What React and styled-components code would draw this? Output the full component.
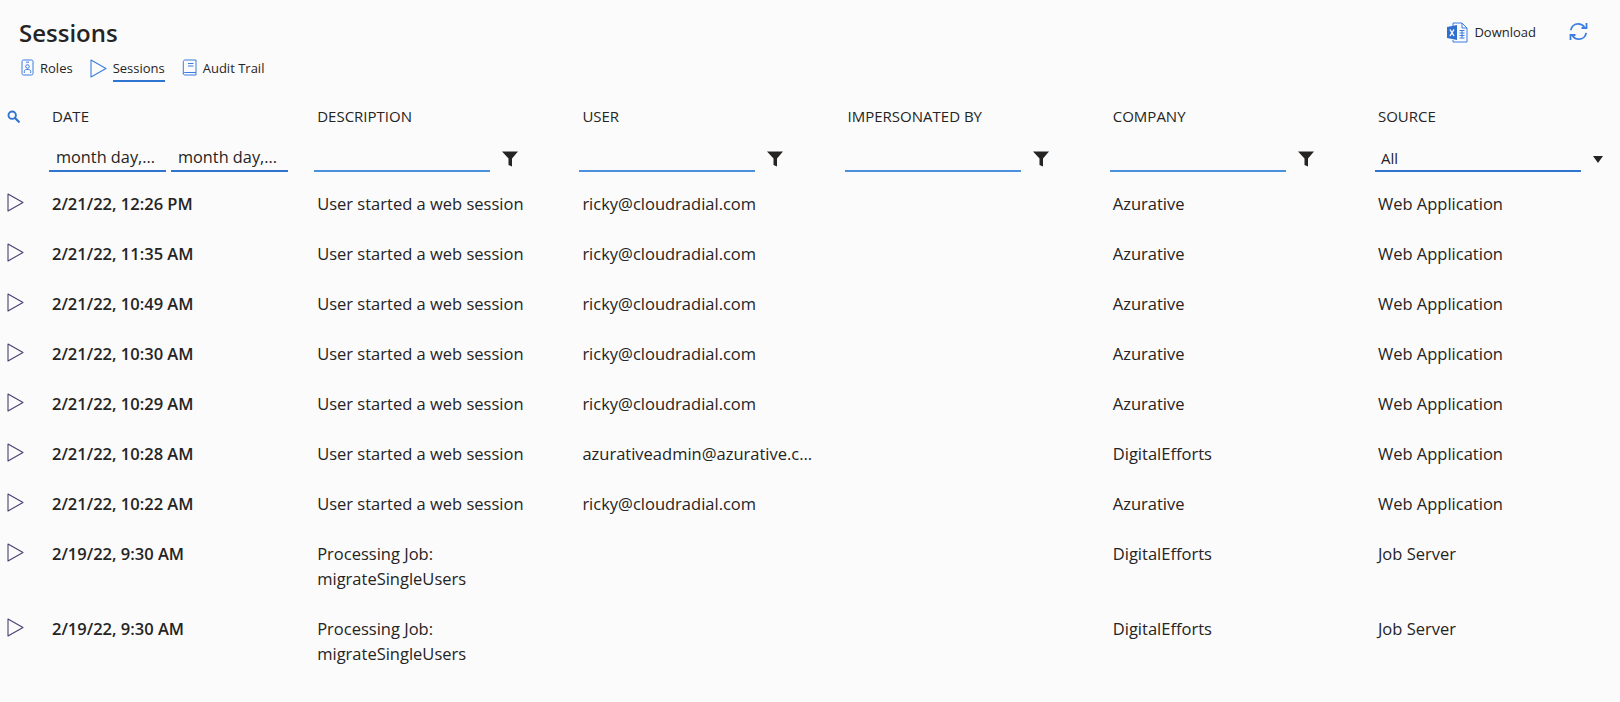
import React from 'react';
import styled, { createGlobalStyle } from 'styled-components';

const GlobalStyle = createGlobalStyle`
  html, body {
    margin: 0;
    padding: 0;
    background: #fbfbfc;
    color: #252423;
    font-family: 'Open Sans', 'Noto Sans', 'Liberation Sans', sans-serif;
  }
`;

const web = 'User started a web session';
const job = ['Processing Job:', 'migrateSingleUsers'];
const ricky = 'ricky@cloudradial.com';
const app = 'Web Application';

const rows = [
  { date: '2/21/22, 12:26 PM', desc: [web], user: ricky, company: 'Azurative', source: app },
  { date: '2/21/22, 11:35 AM', desc: [web], user: ricky, company: 'Azurative', source: app },
  { date: '2/21/22, 10:49 AM', desc: [web], user: ricky, company: 'Azurative', source: app },
  { date: '2/21/22, 10:30 AM', desc: [web], user: ricky, company: 'Azurative', source: app },
  { date: '2/21/22, 10:29 AM', desc: [web], user: ricky, company: 'Azurative', source: app },
  { date: '2/21/22, 10:28 AM', desc: [web], user: 'azurativeadmin@azurative.com', company: 'DigitalEfforts', source: app },
  { date: '2/21/22, 10:22 AM', desc: [web], user: ricky, company: 'Azurative', source: app },
  { date: '2/19/22, 9:30 AM', desc: job, user: '', company: 'DigitalEfforts', source: 'Job Server' },
  { date: '2/19/22, 9:30 AM', desc: job, user: '', company: 'DigitalEfforts', source: 'Job Server' },
];

const PlayIcon = ({ color = '#4b3f72' }) => (
  <svg width="17" height="19" viewBox="0 0 17 19" fill="none">
    <path d="M1 1 L16 9.5 L1 18 Z" stroke={color} strokeWidth="1.1" strokeLinejoin="round" />
  </svg>
);

const BadgeIcon = () => (
  <svg width="13" height="17" viewBox="0 0 13 17" fill="none" stroke="#3b7de0" strokeWidth="1">
    <rect x="1" y="1" width="11" height="15" rx="1.5" />
    <path d="M5 3.2h3" />
    <circle cx="6.5" cy="7.5" r="1.8" />
    <path d="M3.3 14v-1.5c0-1.2 1-2 2-2h2.4c1 0 2 .8 2 2V14" />
  </svg>
);

const BookIcon = () => (
  <svg width="15" height="17" viewBox="0 0 15 17" fill="none" stroke="#3b7de0" strokeWidth="1">
    <path d="M3 1h11v12.5H3c-1 0-1.7.7-1.7 1.3S2 16 3 16h11v-2.5" />
    <path d="M1.3 15V2.6C1.3 1.7 2 1 3 1" />
    <path d="M6 4.5h5.5M6 7h5.5" />
  </svg>
);

const SearchIcon = () => (
  <svg width="13" height="13" viewBox="0 0 13 13" fill="none" stroke="#2f74d0">
    <circle cx="5.2" cy="5.2" r="3.7" strokeWidth="1.9" />
    <path d="M8 8l3.8 3.8" strokeWidth="2.2" strokeLinecap="round" />
  </svg>
);

const FilterIcon = () => (
  <svg width="16" height="16" viewBox="0 0 16 16" fill="#252423">
    <path d="M0 .5h16L10 7.5v8L6.5 14V7.5z" />
  </svg>
);

const ExcelIcon = () => (
  <svg width="21" height="21" viewBox="0 0 21 21" fill="none">
    <path d="M6 4V1h9l5 5v14H6v-2" stroke="#3b7de0" strokeWidth="1" />
    <path d="M15 1v5h5" stroke="#3b7de0" strokeWidth="1" />
    <path d="M12.5 8.5h5M12.5 11h5M12.5 13.5h5M12.5 16h5M15 8.5v7.5" stroke="#3b7de0" strokeWidth="1" />
    <path d="M0 5l10-2v15L0 16z" fill="#2f6fd0" />
    <path d="M3 7.5l4 6.5M7 7.5L3 14" stroke="#fff" strokeWidth="1.4" />
  </svg>
);

const RefreshIcon = () => (
  <svg width="19" height="19" viewBox="0 0 19 19" fill="none" stroke="#3b7de0" strokeWidth="1.8">
    <path d="M1.8 8.2C2.4 4.4 5.5 1.8 9.2 1.8c2.6 0 4.8 1.2 6.2 3.2" />
    <path d="M17.5 1v5h-5" />
    <path d="M17.2 10.8c-.6 3.8-3.7 6.4-7.4 6.4-2.6 0-4.8-1.2-6.2-3.2" />
    <path d="M1.5 18v-5h5" />
  </svg>
);

const Tab = ({ icon, label, active }) => (
  <TabItem>
    {icon}
    <TabLabel $active={active}>{label}</TabLabel>
  </TabItem>
);

const App = () => {
  return (
    <Page>
      <GlobalStyle />
      <Header>
        <div>
          <Title>Sessions</Title>
          <Tabs>
            <Tab icon={<BadgeIcon />} label="Roles" />
            <Tab icon={<PlayIcon color="#3b7de0" />} label="Sessions" active />
            <Tab icon={<BookIcon />} label="Audit Trail" />
          </Tabs>
        </div>
        <Actions>
          <Download>
            <ExcelIcon />
            <span>Download</span>
          </Download>
          <RefreshIcon />
        </Actions>
      </Header>
      <Table>
        <HeadRow>
          <IconCell>
            <SearchIcon />
          </IconCell>
          <HeadCell>DATE</HeadCell>
          <HeadCell>DESCRIPTION</HeadCell>
          <HeadCell>USER</HeadCell>
          <HeadCell>IMPERSONATED BY</HeadCell>
          <HeadCell>COMPANY</HeadCell>
          <HeadCell>SOURCE</HeadCell>
        </HeadRow>
        <FilterRow>
          <div />
          <DateFilters>
            <DateInput>month day,...</DateInput>
            <DateInput>month day,...</DateInput>
          </DateFilters>
          {[0, 1, 2, 3].map((i) => (
            <FilterCell key={i}>
              <FilterInput />
              <FilterIcon />
            </FilterCell>
          ))}
          <SourceCell>
            <SourceSelect>All</SourceSelect>
            <Caret />
          </SourceCell>
        </FilterRow>
        {rows.map((row, i) => (
          <Row key={i} $tall={row.desc.length > 1}>
            <RowIcon>
              <PlayIcon />
            </RowIcon>
            <DateCell>{row.date}</DateCell>
            <Cell>
              {row.desc.map((line) => (
                <div key={line}>{line}</div>
              ))}
            </Cell>
            <Cell>
              <Clipped>{row.user}</Clipped>
            </Cell>
            <Cell />
            <Cell>{row.company}</Cell>
            <Cell>{row.source}</Cell>
          </Row>
        ))}
      </Table>
    </Page>
  );
};

const Page = styled.div`
  width: 1620px;
  height: 702px;
  overflow: hidden;
  box-sizing: border-box;
`;

const Header = styled.div`
  display: flex;
  justify-content: space-between;
  padding: 16px 32px 0 19px;
  height: 95px;
  box-sizing: border-box;
`;

const Title = styled.h1`
  margin: 0;
  font-size: 24px;
  line-height: 33px;
  font-weight: 600;
`;

const Tabs = styled.div`
  display: flex;
  align-items: flex-start;
  gap: 17px;
  margin: 10px 0 0 2px;
`;

const TabItem = styled.div`
  display: flex;
  align-items: flex-start;
  gap: 6px;
  font-size: 13px;
  line-height: 18px;
`;

const TabLabel = styled.span`
  padding-bottom: 3px;
  border-bottom: 2px solid ${(p) => (p.$active ? '#2f74d0' : 'transparent')};
  font-weight: ${(p) => (p.$active ? 500 : 400)};
`;

const Actions = styled.div`
  display: flex;
  align-items: flex-start;
  gap: 33px;
  font-size: 13px;
  padding-top: 6px;
`;

const Download = styled.div`
  display: flex;
  align-items: center;
  gap: 6px;
  line-height: 21px;
`;

const Table = styled.div`
  display: flex;
  flex-direction: column;
`;

const columns = 'grid-template-columns: 52px repeat(5, 265.2px) 1fr;';

const HeadRow = styled.div`
  display: grid;
  ${columns}
  height: 42px;
  align-items: center;
`;

const HeadCell = styled.div`
  font-size: 15px;
`;

const IconCell = styled.div`
  display: flex;
  padding-left: 7px;
`;

const RowIcon = styled(IconCell)`
  padding-top: 2px;
`;

const FilterRow = styled.div`
  display: grid;
  ${columns}
  height: 35px;
  align-items: end;
  padding-bottom: 7px;
`;

const DateFilters = styled.div`
  display: flex;
  gap: 5px;
  margin-left: -3px;
`;

const DateInput = styled.div`
  width: 117px;
  box-sizing: border-box;
  padding: 0 0 1px 7px;
  border-bottom: 2px solid #2f74d0;
  font-size: 16.3px;
  line-height: 23px;
  white-space: nowrap;
`;

const FilterCell = styled.div`
  display: flex;
  align-items: center;
  gap: 12px;
  margin-left: -3px;
`;

const FilterInput = styled.div`
  width: 176px;
  height: 24px;
  border-bottom: 2px solid #4a90dc;
`;

const SourceCell = styled.div`
  display: flex;
  align-items: center;
  gap: 12px;
  margin-left: -3px;
`;

const SourceSelect = styled.div`
  width: 206px;
  box-sizing: border-box;
  padding-left: 6px;
  border-bottom: 2px solid #2f74d0;
  font-size: 15px;
  line-height: 24px;
`;

const Caret = styled.div`
  width: 0;
  height: 0;
  border-left: 5px solid transparent;
  border-right: 5px solid transparent;
  border-top: 7px solid #252423;
`;

const Row = styled.div`
  display: grid;
  ${columns}
  height: ${(p) => (p.$tall ? '75px' : '50px')};
  padding-top: 12px;
  box-sizing: border-box;
  font-size: 16.5px;
  line-height: 25px;
`;

const Cell = styled.div`
  min-width: 0;
`;

const DateCell = styled.div`
  font-weight: 600;
`;

const Clipped = styled.div`
  width: 232px;
  overflow: hidden;
  white-space: nowrap;
  text-overflow: ellipsis;
`;

export default App;
